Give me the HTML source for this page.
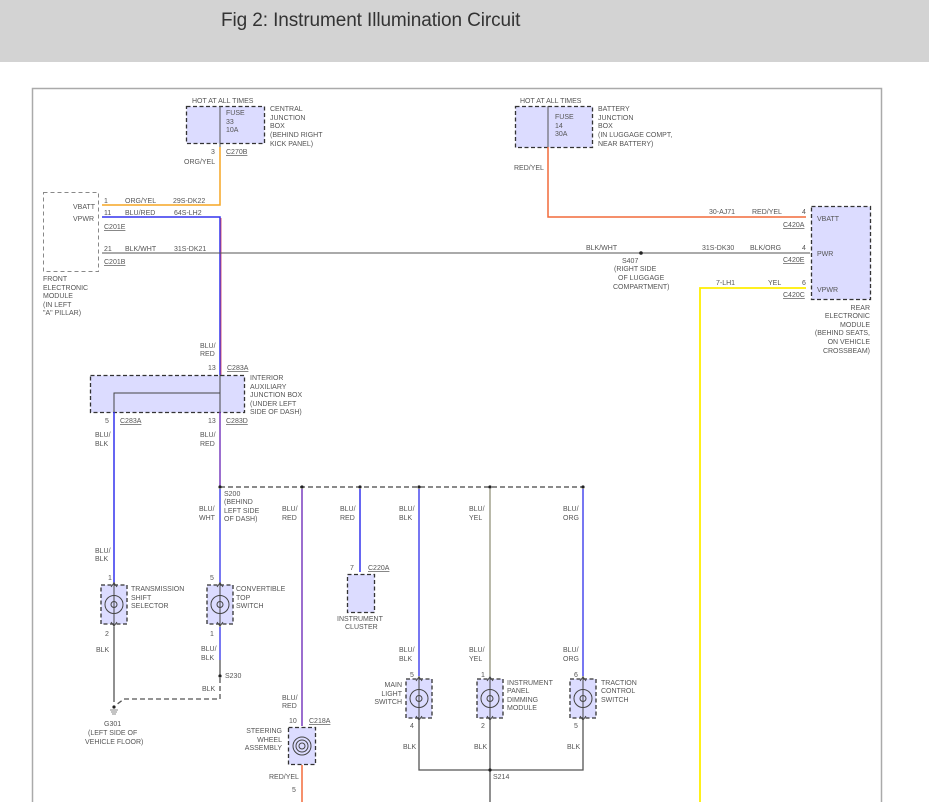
<!DOCTYPE html>
<html><head><meta charset="utf-8"><style>
html,body{margin:0;padding:0;background:#fff;width:929px;height:802px;overflow:hidden}
.hdr{position:absolute;left:0;top:0;width:929px;height:62px;background:#d3d3d3}
.hdr span{position:absolute;left:221px;top:10px;font:19px "Liberation Sans",sans-serif;color:#333;letter-spacing:-0.1px}
svg{position:absolute;left:0;top:0}
text{font-family:"Liberation Sans",sans-serif;font-size:7px;fill:#555}
.u{text-decoration:underline}
.bx{fill:#dcdcff;stroke:#333;stroke-width:1.3;stroke-dasharray:4,2.5}
</style></head><body>
<div class="hdr"><span>Fig 2: Instrument Illumination Circuit</span></div>
<svg width="929" height="802" viewBox="0 0 929 802">
<defs>
<g id="sw">
<rect class="bx" x="-13" y="0" width="26" height="39"/>
<circle cx="0" cy="19.5" r="9" fill="none" stroke="#444"/>
<circle cx="0" cy="19.5" r="3" fill="none" stroke="#444"/>
<line x1="0" y1="-3" x2="0" y2="42" stroke="#444"/>
<path d="M-3,2 L0,-2 L3,2 M-3,37 L0,41 L3,37" fill="none" stroke="#444"/>
</g>
</defs>
<rect x="32.5" y="88.5" width="849" height="720" fill="none" stroke="#aaa" stroke-width="1.5"/>

<!-- Central junction box -->
<rect class="bx" x="186.5" y="106.5" width="78" height="37"/>
<line x1="220" y1="106" x2="220" y2="147" stroke="#555"/>
<text x="192" y="103">HOT AT ALL TIMES</text>
<text x="226" y="115">FUSE</text><text x="226" y="124">33</text><text x="226" y="132">10A</text>
<text x="270" y="111">CENTRAL</text><text x="270" y="120">JUNCTION</text><text x="270" y="128">BOX</text><text x="270" y="137">(BEHIND RIGHT</text><text x="270" y="146">KICK PANEL)</text>
<text x="211" y="154">3</text><text x="226" y="154" class="u">C270B</text>
<text x="184" y="164">ORG/YEL</text>
<polyline points="220,147 220,205 102,205" fill="none" stroke="#f5a623" stroke-width="1.5"/>

<!-- Front module -->
<rect x="43.5" y="192.5" width="55" height="79" fill="none" stroke="#888" stroke-dasharray="4,3"/>
<text x="73" y="209">VBATT</text><text x="73" y="221">VPWR</text>
<text x="104" y="203">1</text><text x="125" y="203">ORG/YEL</text><text x="173" y="203">29S-DK22</text>
<text x="104" y="215">11</text><text x="125" y="215">BLU/RED</text><text x="174" y="215">64S-LH2</text>
<text x="104" y="229" class="u">C201E</text>
<text x="104" y="251">21</text><text x="125" y="251">BLK/WHT</text><text x="174" y="251">31S-DK21</text>
<text x="104" y="264" class="u">C201B</text>
<text x="43" y="281">FRONT</text><text x="43" y="290">ELECTRONIC</text><text x="43" y="298">MODULE</text><text x="43" y="307">(IN LEFT</text><text x="43" y="315">"A" PILLAR)</text>
<polyline points="102,217 220,217 220,375" fill="none" stroke="#3333ee" stroke-width="1.5"/>
<line x1="221" y1="218" x2="221" y2="375" stroke="#cc3355" stroke-width="0.8"/>
<line x1="102" y1="253" x2="810" y2="253" stroke="#555" stroke-width="1"/>
<circle cx="641" cy="253" r="1.8" fill="#222"/>

<!-- Battery JB -->
<rect class="bx" x="515.5" y="106.5" width="77" height="41"/>
<line x1="548" y1="106" x2="548" y2="147" stroke="#555"/>
<text x="520" y="103">HOT AT ALL TIMES</text>
<text x="555" y="119">FUSE</text><text x="555" y="128">14</text><text x="555" y="136">30A</text>
<text x="598" y="111">BATTERY</text><text x="598" y="120">JUNCTION</text><text x="598" y="128">BOX</text><text x="598" y="137">(IN LUGGAGE COMPT,</text><text x="598" y="146">NEAR BATTERY)</text>
<text x="514" y="170">RED/YEL</text>
<polyline points="548,147 548,217 806,217" fill="none" stroke="#f26a3a" stroke-width="1.5"/>
<text x="709" y="214">30-AJ71</text><text x="752" y="214">RED/YEL</text><text x="802" y="214">4</text><text x="783" y="227" class="u">C420A</text>
<text x="586" y="250">BLK/WHT</text><text x="702" y="250">31S-DK30</text><text x="750" y="250">BLK/ORG</text><text x="802" y="250">4</text><text x="783" y="262" class="u">C420E</text>
<text x="622" y="263">S407</text><text x="614" y="271">(RIGHT SIDE</text><text x="618" y="280">OF LUGGAGE</text><text x="613" y="289">COMPARTMENT)</text>
<polyline points="700,802 700,288 806,288" fill="none" stroke="#ffee00" stroke-width="1.8"/>
<text x="716" y="285">7-LH1</text><text x="768" y="285">YEL</text><text x="802" y="285">6</text><text x="783" y="297" class="u">C420C</text>

<!-- Rear module -->
<rect class="bx" x="811.5" y="206.5" width="59" height="93"/>
<text x="817" y="221">VBATT</text><text x="817" y="256">PWR</text><text x="817" y="292">VPWR</text>
<g text-anchor="end"><text x="870" y="310">REAR</text><text x="870" y="318">ELECTRONIC</text><text x="870" y="327">MODULE</text><text x="870" y="335">(BEHIND SEATS,</text><text x="870" y="344">ON VEHICLE</text><text x="870" y="353">CROSSBEAM)</text></g>

<!-- Interior aux JB -->
<text x="200" y="348">BLU/</text><text x="200" y="356">RED</text>
<text x="208" y="370">13</text><text x="227" y="370" class="u">C283A</text>
<rect class="bx" x="90.5" y="375.5" width="154" height="37"/>
<polyline points="114,412 114,393 220,393" fill="none" stroke="#444"/>
<line x1="220" y1="375" x2="220" y2="412" stroke="#444"/>
<text x="250" y="380">INTERIOR</text><text x="250" y="389">AUXILIARY</text><text x="250" y="397">JUNCTION BOX</text><text x="250" y="406">(UNDER LEFT</text><text x="250" y="414">SIDE OF DASH)</text>
<text x="105" y="423">5</text><text x="120" y="423" class="u">C283A</text><text x="208" y="423">13</text><text x="226" y="423" class="u">C283D</text>
<text x="95" y="437">BLU/</text><text x="95" y="446">BLK</text>
<text x="200" y="437">BLU/</text><text x="200" y="446">RED</text>
<line x1="114" y1="412" x2="114" y2="585" stroke="#3333ee" stroke-width="1.5"/>
<line x1="220" y1="412" x2="220" y2="487" stroke="#7a3fbf" stroke-width="1.5"/>

<!-- splice bus -->
<line x1="220" y1="487" x2="583" y2="487" stroke="#444" stroke-width="1.3" stroke-dasharray="5,3"/>
<g fill="#222"><circle cx="220" cy="487" r="1.6"/><circle cx="302" cy="487" r="1.6"/><circle cx="360" cy="487" r="1.6"/><circle cx="419" cy="487" r="1.6"/><circle cx="490" cy="487" r="1.6"/><circle cx="583" cy="487" r="1.6"/></g>
<text x="224" y="496">S200</text><text x="224" y="504">(BEHIND</text><text x="224" y="513">LEFT SIDE</text><text x="224" y="521">OF DASH)</text>
<text x="199" y="511">BLU/</text><text x="199" y="520">WHT</text>
<text x="282" y="511">BLU/</text><text x="282" y="520">RED</text>
<text x="340" y="511">BLU/</text><text x="340" y="520">RED</text>
<text x="399" y="511">BLU/</text><text x="399" y="520">BLK</text>
<text x="469" y="511">BLU/</text><text x="469" y="520">YEL</text>
<text x="563" y="511">BLU/</text><text x="563" y="520">ORG</text>
<line x1="220" y1="489" x2="220" y2="585" stroke="#4a4aee" stroke-width="1.5"/>
<line x1="302" y1="489" x2="302" y2="726" stroke="#7a3fbf" stroke-width="1.5"/>
<line x1="360" y1="489" x2="360" y2="572" stroke="#3333ee" stroke-width="1.5"/>
<line x1="419" y1="489" x2="419" y2="676" stroke="#4a4aee" stroke-width="1.5"/>
<line x1="490" y1="489" x2="490" y2="676" stroke="#8a8a70" stroke-width="1.2"/>
<line x1="583" y1="489" x2="583" y2="676" stroke="#4a4aee" stroke-width="1.5"/>

<!-- switches -->
<use href="#sw" x="114" y="585"/>
<use href="#sw" x="220" y="585"/>
<use href="#sw" x="419" y="679"/>
<use href="#sw" x="490" y="679"/>
<use href="#sw" x="583" y="679"/>
<text x="108" y="580">1</text><text x="95" y="553">BLU/</text><text x="95" y="561">BLK</text>
<text x="131" y="591">TRANSMISSION</text><text x="131" y="600">SHIFT</text><text x="131" y="608">SELECTOR</text>
<text x="105" y="636">2</text><text x="96" y="652">BLK</text>
<line x1="114" y1="627" x2="114" y2="702" stroke="#555" stroke-width="1.3"/>
<text x="210" y="580">5</text>
<text x="236" y="591">CONVERTIBLE</text><text x="236" y="600">TOP</text><text x="236" y="608">SWITCH</text>
<text x="210" y="636">1</text><text x="201" y="651">BLU/</text><text x="201" y="660">BLK</text>
<line x1="220" y1="627" x2="220" y2="660" stroke="#4a4aee" stroke-width="1.5"/>
<line x1="220" y1="660" x2="220" y2="676" stroke="#555" stroke-width="1.3"/>
<circle cx="220" cy="676" r="1.6" fill="#222"/><text x="225" y="678">S230</text>
<text x="202" y="691">BLK</text>
<path d="M220,678 L220,699 L124,699 L116,705" fill="none" stroke="#555" stroke-width="1.3" stroke-dasharray="5,3"/>
<circle cx="114" cy="707" r="1.6" fill="#222"/>
<path d="M110,710 h8 M111,712 h6 M112,714 h4" stroke="#888"/>
<text x="104" y="726">G301</text><text x="88" y="735">(LEFT SIDE OF</text><text x="85" y="744">VEHICLE FLOOR)</text>

<!-- instrument cluster -->
<text x="350" y="570">7</text><text x="368" y="570" class="u">C220A</text>
<rect class="bx" x="347.5" y="574.5" width="27" height="38"/>
<text x="337" y="621">INSTRUMENT</text><text x="345" y="629">CLUSTER</text>

<!-- lower switch labels -->
<text x="399" y="652">BLU/</text><text x="399" y="661">BLK</text>
<text x="469" y="652">BLU/</text><text x="469" y="661">YEL</text>
<text x="563" y="652">BLU/</text><text x="563" y="661">ORG</text>
<text x="410" y="677">5</text><text x="481" y="677">1</text><text x="574" y="677">6</text>
<g text-anchor="end"><text x="402" y="687">MAIN</text><text x="402" y="696">LIGHT</text><text x="402" y="704">SWITCH</text></g>
<text x="507" y="685">INSTRUMENT</text><text x="507" y="693">PANEL</text><text x="507" y="702">DIMMING</text><text x="507" y="710">MODULE</text>
<text x="601" y="685">TRACTION</text><text x="601" y="693">CONTROL</text><text x="601" y="702">SWITCH</text>
<text x="410" y="728">4</text><text x="481" y="728">2</text><text x="574" y="728">5</text>
<text x="403" y="749">BLK</text><text x="474" y="749">BLK</text><text x="567" y="749">BLK</text>
<polyline points="419,720 419,770 583,770 583,720" fill="none" stroke="#555" stroke-width="1.3"/>
<line x1="490" y1="720" x2="490" y2="802" stroke="#555" stroke-width="1.3"/>
<circle cx="490" cy="770" r="1.6" fill="#222"/><text x="493" y="779">S214</text>

<!-- steering wheel -->
<text x="282" y="700">BLU/</text><text x="282" y="708">RED</text>
<text x="289" y="723">10</text><text x="309" y="723" class="u">C218A</text>
<rect class="bx" x="288.5" y="727.5" width="27" height="37"/>
<circle cx="302" cy="746" r="9" fill="none" stroke="#444"/><circle cx="302" cy="746" r="6" fill="none" stroke="#444"/><circle cx="302" cy="746" r="3" fill="none" stroke="#444"/>
<g text-anchor="end"><text x="282" y="733">STEERING</text><text x="282" y="742">WHEEL</text><text x="282" y="750">ASSEMBLY</text></g>
<line x1="302" y1="765" x2="302" y2="802" stroke="#f26a3a" stroke-width="1.5"/>
<text x="269" y="779">RED/YEL</text><text x="292" y="792">5</text>
</svg>
</body></html>
